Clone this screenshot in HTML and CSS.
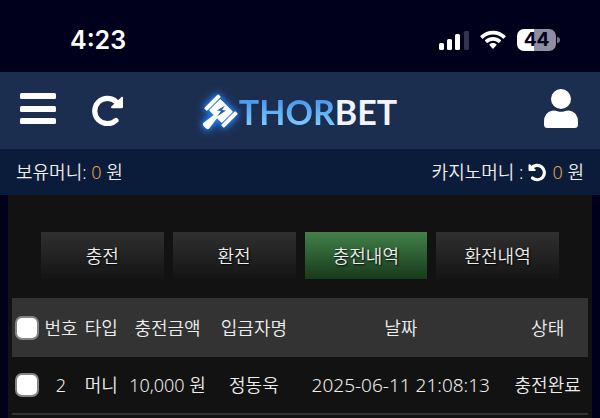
FILE: index.html
```html
<!DOCTYPE html>
<html lang="ko">
<head>
    <meta charset="UTF-8">
    <meta name="viewport" content="width=device-width, initial-scale=1.0">
    <title>THORBET</title>
    <link rel="stylesheet" href="styles.css">
</head>
<body>
    <div class="statusBar">
        <span class="clock">4:23</span>
        <div class="statusIcons">
            <svg class="signal" width="30" height="20" viewBox="0 0 30 20" aria-hidden="true">
                <rect x="0" y="13" width="5" height="7" rx="1.5" fill="#fff"/>
                <rect x="8" y="9" width="5" height="11" rx="1.5" fill="#fff"/>
                <rect x="16" y="4" width="5" height="16" rx="1.5" fill="#fff"/>
                <rect x="25" y="1" width="5" height="19" rx="1.5" fill="#35344f"/>
            </svg>
            <svg class="wifi" width="26" height="20" viewBox="0 0 26 20" aria-hidden="true">
                <path d="M13 .8C8.200.8 3.800 2.700.5 5.800c-.3.300-.3.700 0 1l1.600 1.600c.3.300.7.300 1 0C5.800 5.900 9.200 4.500 13 4.500s7.200 1.400 9.900 3.900c.3.300.7.300 1 0l1.600-1.600c.3-.3.300-.7 0-1C22.200 2.700 17.800.8 13 .8z" fill="#fff"/>
                <path d="M13 7c-3 0-5.800 1.200-7.900 3.100-.3.300-.3.700 0 1l1.700 1.700c.3.300.7.300 1 0C9.200 11.500 11 10.800 13 10.800s3.800.7 5.200 2c.3.300.7.300 1 0l1.700-1.700c.3-.3.300-.7 0-1C18.800 8.200 16 7 13 7z" fill="#fff"/>
                <path d="M13 13c-1.300 0-2.500.5-3.400 1.300-.3.300-.3.700 0 1l2.900 3.100c.3.300.7.300 1 0l2.900-3.100c.3-.3.300-.7 0-1C15.500 13.500 14.300 13 13 13z" fill="#fff"/>
            </svg>
            <div class="battery"><span class="batteryLevel">44</span></div>
        </div>
    </div>

    <header class="topNavbar">
        <div class="navLeft">
            <button type="button" class="iconButton" aria-label="메뉴">
                <svg width="36" height="32" viewBox="0 0 36 32">
                    <rect x="0" y="0" width="36" height="6" rx="1.500" fill="#fff"/>
                    <rect x="0" y="13" width="36" height="6" rx="1.500" fill="#fff"/>
                    <rect x="0" y="25" width="36" height="6" rx="1.500" fill="#fff"/>
                </svg>
            </button>
            <button type="button" class="iconButton" aria-label="새로고침">
                <svg width="32" height="34" viewBox="0 0 32 34">
                    <path d="M24.200 9.800A12.700 12.700 0 1 0 24 28.400" fill="none" stroke="#fff" stroke-width="5.200" stroke-linecap="round"/>
                    <path d="M29.500 5c.8-.7 1.500-.3 1.500.6V15c0 .7-.5 1.200-1.200 1.200h-9.600c-1.200 0-1.600-1-.9-1.700z" fill="#fff"/>
                </svg>
            </button>
        </div>
        <a href="#" class="logo">
            <svg class="hammer" width="38" height="38" viewBox="0 0 38 38" aria-hidden="true">
                <g transform="translate(20 18) rotate(45)" fill="#fff">
                    <rect x="-14" y="-10" width="4" height="20" rx="1"/>
                    <rect x="10" y="-10" width="4" height="20" rx="1"/>
                    <rect x="-9" y="-8" width="18" height="16" rx="1"/>
                    <path d="M-2 6h4l2 15q0 2-4 2t-4-2z"/>
                </g>
                <path d="M24 12.500l-8 5 4 .6-4 5.400 9-6-4-.6z" fill="#1e5fae"/>
            </svg>
            <span class="logoText"><span class="logoThor">THOR</span><span class="logoBet">BET</span></span>
        </a>
        <button type="button" class="iconButton" aria-label="내 정보">
            <svg width="34" height="40" viewBox="0 0 34 40">
                <circle cx="17" cy="10" r="10" fill="#fff"/>
                <path d="M9 21.500q3 0 4.500.7 3.500 1.300 7 0 1.500-.7 4.500-.7 9 1.500 9 11.500v2.500q0 3.500-3.500 3.500h-27Q0 39 0 35.500V33Q0 23 9 21.500z" fill="#fff"/>
            </svg>
        </button>
    </header>

    <div class="moneyBar">
        <div>보유머니: <span class="amount">0</span> 원</div>
        <div class="casinoMoney">
            <span>카지노머니 :</span>
            <button type="button" class="iconButton" aria-label="카지노머니 새로고침">
                <svg width="19" height="19" viewBox="0 0 19 19">
                    <path d="M3.500 5.200A7.200 7.200 0 1 1 4.500 15" fill="none" stroke="#fff" stroke-width="3.200" stroke-linecap="round"/>
                    <path d="M.5 1.500Q1.500.8 2.200 1.500L7.500 6.500q.8 1.200-.6 1.500H1.300Q.5 8 .5 7.200z" fill="#fff"/>
                </svg>
            </button>
            <span><span class="amount">0</span> 원</span>
        </div>
    </div>

    <main class="panel">
        <nav class="tabs">
            <button type="button" class="tab">충전</button>
            <button type="button" class="tab">환전</button>
            <button type="button" class="tab active">충전내역</button>
            <button type="button" class="tab">환전내역</button>
        </nav>

        <table class="historyTable">
            <colgroup>
                <col class="colCheck">
                <col class="colNo">
                <col class="colType">
                <col class="colAmount">
                <col class="colName">
                <col class="colDate">
                <col class="colState">
            </colgroup>
            <thead>
                <tr>
                    <th><input type="checkbox" aria-label="전체 선택"></th>
                    <th>번호</th>
                    <th>타입</th>
                    <th>충전금액</th>
                    <th>입금자명</th>
                    <th>날짜</th>
                    <th>상태</th>
                </tr>
            </thead>
            <tbody>
                <tr>
                    <td><input type="checkbox" aria-label="2번 선택"></td>
                    <td>2</td>
                    <td>머니</td>
                    <td>10,000 원</td>
                    <td>정동욱</td>
                    <td class="date">2025-06-11 21:08:13</td>
                    <td>충전완료</td>
                </tr>
            </tbody>
        </table>
    </main>
</body>
</html>
```
FILE: styles.css
```css
* {
    box-sizing: border-box;
}

body {
    margin: 0;
    min-height: 100vh;
    display: flex;
    flex-direction: column;
    background-color: #01001c;
    color: #eee;
    font-family: 'Noto Sans', 'Noto Sans CJK KR', sans-serif;
    font-size: 18px;
    font-weight: 350;
    line-height: 26px;
}

svg {
    display: block;
}

button {
    border: none;
    padding: 0;
    color: inherit;
    font: inherit;
    cursor: pointer;
}

.iconButton {
    background: none;
}

/* phone status bar */
.statusBar {
    display: flex;
    justify-content: space-between;
    align-items: center;
    padding: 27px 44px 19px 70px;
}

.clock {
    color: #fff;
    font-family: Inter, sans-serif;
    font-size: 25px;
    font-weight: 600;
}

.statusIcons {
    display: flex;
    align-items: center;
    gap: 11px;
}

.battery {
    position: relative;
    width: 39px;
    height: 22px;
    border-radius: 7px;
    background: linear-gradient(to right, #fff 44%, #8f8da0 44%);
    text-align: center;
}

.battery::after {
    content: "";
    position: absolute;
    top: 8px;
    right: -4px;
    width: 3px;
    height: 6px;
    border-radius: 0 3px 3px 0;
    background-color: #77758a;
}

.batteryLevel {
    display: block;
    color: #01001c;
    font-family: Inter, sans-serif;
    font-size: 19px;
    font-weight: 700;
    line-height: 22px;
}

.topNavbar {
    display: grid;
    grid-template-columns: 1fr auto 1fr;
    align-items: center;
    height: 77px;
    padding: 0 22px 4px 20px;
    background-color: #1c2e4f;
}

.topNavbar > .iconButton {
    justify-self: end;
}

.navLeft {
    display: flex;
    align-items: center;
    gap: 36px;
}

.logo {
    display: flex;
    align-items: center;
    padding-top: 6px;
    text-decoration: none;
}

.hammer {
    overflow: visible;
    filter: drop-shadow(0 0 3px #2f8dff) drop-shadow(0 0 4px #1f6fe0);
}

.logoText {
    font-family: Lato, sans-serif;
    font-size: 34px;
    font-weight: 700;
    line-height: 38px;
}

.logoThor {
    background: linear-gradient(to bottom, #4796ee 20%, #7ccbff 85%);
    background-clip: text;
    -webkit-background-clip: text;
    color: transparent;
}

.logoBet {
    color: #f1f3ff;
}

.moneyBar {
    display: flex;
    justify-content: space-between;
    align-items: center;
    height: 46px;
    padding: 0 16px;
    background-color: #0b1c3a;
}

.casinoMoney {
    display: flex;
    align-items: center;
    gap: 5px;
}

.amount {
    color: #e5a044;
}

.panel {
    flex: 1;
    margin: 0 8px;
    padding: 37px 4px 0;
    background-color: #121212;
}

.tabs {
    display: grid;
    grid-template-columns: repeat(4, 1fr);
    gap: 9px;
    padding: 0 29px;
    margin-bottom: 19px;
}

.tab {
    height: 47px;
    background: linear-gradient(to bottom, #303030, #141414);
    text-shadow: 1px 1px 2px #000;
}

.tab.active {
    background: linear-gradient(to bottom, #43804a, #173a1b);
}

.historyTable {
    width: 100%;
    table-layout: fixed;
    border-collapse: collapse;
}

.historyTable th,
.historyTable td {
    height: 59px;
    padding: 0;
    font-weight: 350;
    text-align: center;
    white-space: nowrap;
}

.historyTable th {
    background-color: #333;
}

.historyTable td {
    height: 57px;
    border-bottom: 2px solid #333;
}

.historyTable .date {
    font-size: 19px;
}

.historyTable input {
    appearance: none;
    display: block;
    width: 24px;
    height: 24px;
    margin: 0 3px;
    border: 2px solid #858585;
    border-radius: 7px;
    background-color: #fff;
}

.colCheck {
    width: 5%;
}

.colNo,
.colType {
    width: 7%;
}

.colAmount {
    width: 16%;
}

.colName,
.colState {
    width: 14%;
}

.colDate {
    width: 37%;
}
```
